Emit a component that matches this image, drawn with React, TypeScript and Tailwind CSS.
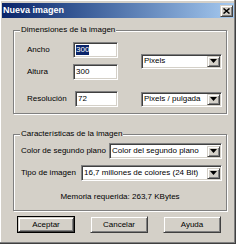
import React from "react";

const sunken =
  "bg-white border border-t-[#808080] border-l-[#808080] border-r-white border-b-white shadow-[inset_1px_1px_0_#404040,inset_-1px_-1px_0_#d4d0c8]";
const raised =
  "bg-[#d4d0c8] border border-t-[#d4d0c8] border-l-[#d4d0c8] border-r-[#404040] border-b-[#404040] shadow-[inset_1px_1px_0_#fff,inset_-1px_-1px_0_#808080]";

function DropBtn() {
  return (
    <div className={`w-[13px] h-[11px] mr-[1px] flex items-center justify-center shrink-0 ${raised}`}>
      <svg width="7" height="4" viewBox="0 0 7 4">
        <path d="M0 0H7L3.5 4Z" fill="#000" />
      </svg>
    </div>
  );
}

function Select({ w, h, text }: { w: string; h: string; text: string }) {
  return (
    <div className={`${w} ${h} flex items-center shrink-0 ${sunken}`}>
      <span className="flex-1 pl-[2px] whitespace-nowrap overflow-hidden">{text}</span>
      <DropBtn />
    </div>
  );
}

function Input({ w, children }: { w: string; children: React.ReactNode }) {
  return (
    <div className={`${w} h-[16px] flex items-center pl-[2px] shrink-0 ${sunken}`}>{children}</div>
  );
}

function Button({ label, def }: { label: string; def?: boolean }) {
  const inner = (
    <div className={`w-full h-full flex items-center justify-center ${raised}`}>{label}</div>
  );
  return def ? (
    <div className="w-[58px] h-[17px] border border-black">{inner}</div>
  ) : (
    <div className="w-[58px] h-[17px]">{inner}</div>
  );
}

function Group({ title, children, className }: { title: string; children: React.ReactNode; className?: string }) {
  return (
    <fieldset
      className={`ml-[11px] w-[214px] m-0 p-0 border border-[#808080] shadow-[inset_1px_1px_0_#fff,1px_1px_0_#fff] ${className ?? ""}`}
    >
      <legend className="ml-[6px] px-[1px] leading-[10px] bg-[#d4d0c8]">{title}</legend>
      {children}
    </fieldset>
  );
}

export default function App() {
  return (
    <div className="w-[240px] h-[247px] bg-white font-['Liberation_Sans',Arial,sans-serif] text-[8px] leading-[10px] text-black">
      <div className="w-[236px] h-[244px] bg-[#d4d0c8] border-r border-b border-r-[#404040] border-b-[#404040] shadow-[inset_-1px_-1px_0_#808080,inset_1px_1px_0_#fff] pt-[3px] pl-[2px] pr-[1px] flex flex-col">
        {/* Title bar */}
        <div className="h-[15px] flex items-center justify-between bg-gradient-to-r from-[#0a246a] to-[#a6caf0] pr-[1px]">
          <span className="pl-[1px] text-white font-bold text-[9px] leading-[15px]">Nueva imagen</span>
          <div className={`w-[13px] h-[12px] flex items-center justify-center ${raised}`}>
            <svg width="7" height="6" viewBox="0 0 7 6">
              <path d="M0.5 0.5L6.5 5.5M6.5 0.5L0.5 5.5" stroke="#000" strokeWidth="1.5" />
            </svg>
          </div>
        </div>

        {/* Group 1 */}
        <Group title="Dimensiones de la imagen" className="mt-[7px]">
          <div className="pl-[13px] pt-[7px] pb-[6px]">
            <div className="flex items-center">
              <div className="flex flex-col gap-[6px]">
                <div className="flex items-center h-[16px]">
                  <span className="w-[46px]">Ancho</span>
                  <Input w="w-[45px]">
                    <span className="bg-[#0a246a] text-white leading-[10px]">300</span>
                  </Input>
                </div>
                <div className="flex items-center h-[16px]">
                  <span className="w-[46px]">Altura</span>
                  <Input w="w-[45px]">300</Input>
                </div>
              </div>
              <div className="ml-[23px]">
                <Select w="w-[81px]" h="h-[15px]" text="Pixels" />
              </div>
            </div>
            <div className="flex items-center mt-[11px]">
              <span className="w-[48px]">Resolución</span>
              <Input w="w-[43px]">72</Input>
              <div className="ml-[23px]">
                <Select w="w-[81px]" h="h-[15px]" text="Pixels / pulgada" />
              </div>
            </div>
          </div>
        </Group>

        {/* Group 2 */}
        <Group title="Características de la imagen" className="mt-[15px]">
          <div className="pl-[7px] pt-[4px] pb-[8px]">
            <div className="flex items-center h-[16px]">
              <span className="w-[88px] whitespace-nowrap">Color de segundo plano</span>
              <Select w="w-[113px]" h="h-[16px]" text="Color del segundo plano" />
            </div>
            <div className="flex items-center h-[16px] mt-[6px]">
              <span className="w-[60px] whitespace-nowrap">Tipo de imagen</span>
              <Select w="w-[141px]" h="h-[16px]" text="16,7 millones de colores (24 Bit)" />
            </div>
            <div className="mt-[11px] text-center pr-[7px]">Memoria requerida: 263,7 KBytes</div>
          </div>
        </Group>

        {/* Buttons */}
        <div className="flex gap-[15px] ml-[15px] mt-[5px]">
          <Button label="Aceptar" def />
          <Button label="Cancelar" />
          <Button label="Ayuda" />
        </div>
      </div>
    </div>
  );
}
